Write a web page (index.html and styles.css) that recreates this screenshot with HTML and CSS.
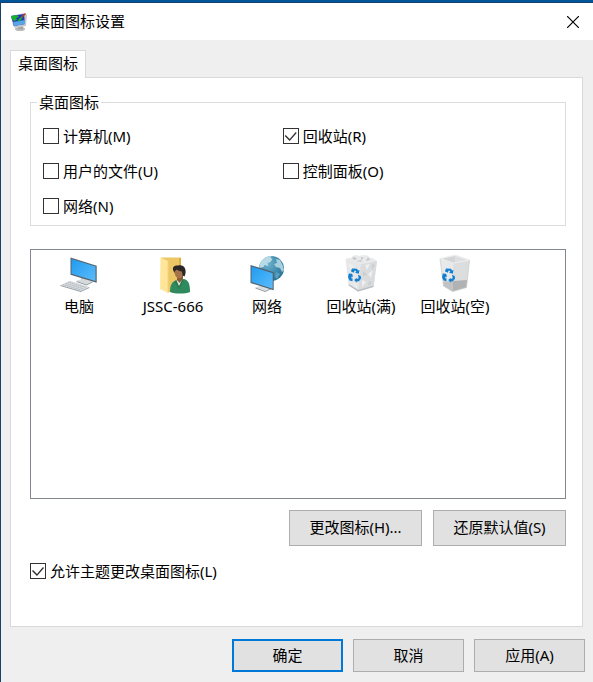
FILE: index.html
```html
<!DOCTYPE html>
<html lang="zh-CN">

<head>
    <meta charset="UTF-8">
    <meta name="viewport" content="width=device-width, initial-scale=1.0">
    <title>桌面图标设置</title>
    <link rel="stylesheet" href="styles.css">
</head>

<body>
    <form class="dialog">
        <header class="title-bar">
            <svg class="title-icon" viewBox="0 0 18 20">
                <ellipse cx="10" cy="17" rx="5" ry="2" fill="#b9b9b9" />
                <path d="M8 13h5v4H8z" fill="#a5a5a5" />
                <path d="M1 4l13-3 3 2-1 11-11 2-2-2z" fill="#c6c9cd" />
                <path d="M1 4l13-2 1 10-11 2z" fill="#2437b8" />
                <path d="M3 10l12-2v4l-11 2z" fill="#58a5e8" />
                <path d="M1 4l6-1 2 2-3 1 1 2-3 1-2-2zM8 8l4-4 2-1-3 5-3 2z" fill="#17b32b" />
                <path d="M11 5l4-4 1 1-4 4z" fill="#b23c23" />
            </svg>
            <h1>桌面图标设置</h1>
            <button type="button" class="close" aria-label="关闭">
                <svg viewBox="0 0 12 12">
                    <path d="M0 0l12 12M12 0L0 12" stroke="#000" stroke-width="1.2" />
                </svg>
            </button>
        </header>

        <main class="content">
            <div class="tabs" role="tablist">
                <button type="button" class="tab" role="tab" aria-selected="true">桌面图标</button>
            </div>

            <section class="panel">
                <fieldset class="group">
                    <legend>桌面图标</legend>
                    <label class="check"><input type="checkbox">计算机(M)</label>
                    <label class="check"><input type="checkbox" checked>回收站(R)</label>
                    <label class="check"><input type="checkbox">用户的文件(U)</label>
                    <label class="check"><input type="checkbox">控制面板(O)</label>
                    <label class="check"><input type="checkbox">网络(N)</label>
                </fieldset>

                <ul class="icon-list">
                    <li>
                        <svg viewBox="0 0 40 40">
                            <defs>
                                <linearGradient id="screen" x1="0" y1="0" x2="1" y2="1">
                                    <stop offset="0" stop-color="#1f9bf0" />
                                    <stop offset="1" stop-color="#5cbcfb" />
                                </linearGradient>
                            </defs>
                            <path d="M22 23l5 1v4l-5-1z" fill="#b4bcc3" />
                            <path d="M17.500 27l6-2.500 10 3-6 3z" fill="#d5dadd" />
                            <path d="M17.500 27v1l10 3.500 6-3v-1l-6 3z" fill="#8f989f" />
                            <path d="M11.500 3.500l26.200 8.200v17l-26.200-8z" fill="#56636d" />
                            <path d="M12.500 5l24 7.500v14.500l-24-7.200z" fill="url(#screen)" />
                            <path d="M1.500 31l9.500-4.300 19.300 6.300-8.600 4z" fill="#d8dcdf" />
                            <path d="M1.500 31v1l20.200 6 8.600-4v-1l-8.600 4z" fill="#959da3" />
                            <path d="M4 30.500l18 5.500M6.500 29.300l18 5.500M9 28l18 5.500" stroke="#a7afb5" stroke-width=".8" stroke-dasharray="1.500 .6" />
                        </svg>
                        <span>电脑</span>
                    </li>
                    <li>
                        <svg viewBox="0 0 40 40">
                            <path d="M8 3.500h20v31l-13 4z" fill="#edc766" />
                            <path d="M26 4h2v30h-2z" fill="#dcae45" />
                            <path d="M7.500 3.500L15 7v32l-8-4z" fill="#ffe69b" />
                            <path d="M15 7v32" stroke="#f4d47c" />
                            <path d="M17 38c0-7 2-10.500 7-12l7-1c4 1 6 4 6 13-5 2-15 2-20 0z" fill="#2f8a5d" />
                            <path d="M23.500 26l2.500 8 3.500-9z" fill="#dfe8e1" />
                            <path d="M23 26l-1.500 2 4.500 7 4.500-8-1-2-3.500 7z" fill="#28794f" />
                            <path d="M24 21h6v4l-3.500 4-2.500-3z" fill="#865a37" />
                            <ellipse cx="26" cy="18" rx="4.500" ry="6.500" fill="#a4734a" />
                            <path d="M20.500 17c-2-5 2-6 5-5.500 6-1.500 9 5 6 11l-2-1-.5-4c-2 0-4-1-5-2-1 1-2.500 1-2.500 3.500z" fill="#2b2625" />
                        </svg>
                        <span>JSSC-666</span>
                    </li>
                    <li>
                        <svg viewBox="0 0 40 40">
                            <defs>
                                <radialGradient id="globe" cx=".35" cy=".3" r=".8">
                                    <stop offset="0" stop-color="#6fb3ce" />
                                    <stop offset="1" stop-color="#206d95" />
                                </radialGradient>
                            </defs>
                            <circle cx="24.500" cy="14.500" r="12.500" fill="url(#globe)" />
                            <path d="M13.500 9c2-4 6-7 11-7l-1 2 2 1-2 3-3 1 1 3-4-1-1 2-4 1c0-2 0-3 1-5z" fill="#b9dbe6" />
                            <path d="M29 5l4 1 3 6 1 4-2 2-2-4-4-1-2-3 3-1z" fill="#a8d0df" />
                            <path d="M29 18l4 2-3 5-2-2z" fill="#5c9fba" />
                            <path d="M14 29l6 2v4l-6-1z" fill="#aeb7bd" />
                            <path d="M8.500 33.500l7-2.500 9.200 3-6.700 3z" fill="#d9dee1" />
                            <path d="M8.500 33.500v1L18 38l6.700-3v-1L18 37z" fill="#929ba1" />
                            <path d="M3.500 11l23.200 7.300v18L3.500 29z" fill="#52616c" />
                            <path d="M4.500 12.500l21.200 6.700v15.600L4.500 28z" fill="url(#screen)" />
                        </svg>
                        <span>网络</span>
                    </li>
                    <li>
                        <svg viewBox="0 0 40 40">
                            <defs>
                                <g id="recycle" fill="#137fd1">
                                    <path d="M-3-6.500l5 .3 1 1.700 1.500-.6-.7 3.800-3.800-1 1.300-.9-1.300-1.500-1.500 2.500-2.600-1.500z" />
                                    <path d="M-6.200-1.600l3.200.3 1.200 3-1.300-.3-.9 1.800h1.500v3l-3-.6-1.500-3.300z" />
                                    <path d="M3-.3l2.700 1.200.4 2.600-2.200 2.800-2.200.3v1.200l-2.500-2.800 2.500-2.300v1.200l2-.6z" />
                                </g>
                            </defs>
                            <path d="M4.500 5L19 2l17 5-3.500 26L17 37.500l-9.300-6z" fill="#e6e7e9" />
                            <path d="M20 9.500L36 7l-3.500 26L17 37.500z" fill="#d9dbdd" />
                            <path d="M4.500 5l6-1 1-2 4-1 3 1 3-1 5 .5 2 2 3 .5 4.500 3-8 2-8 1-8-3z" fill="#e9eaeb" />
                            <path d="M11 4l3-1 2 2-3 1zM20 3l3 1-3 2zM27 3l2 3-4 1zM15 7l5-1 1 2z" fill="#c5c8ca" />
                            <path d="M7 9l6 3-3 5zM24 11l5-1-3 6zM27 20l5-4-2 8zM21 26l4 2-4 5zM12 29l4 2v3z" fill="#efefef" />
                            <path d="M31 10l3 1-3 5zM22 17l4 4-4 1zM28 27l3 2-4 3z" fill="#cbced0" />
                            <path d="M7.500 30l10 6 15.200-4.500L32 33l-15 4.500-9.300-6z" fill="#b9bcbe" />
                            <use href="#recycle" x="14" y="21" />
                        </svg>
                        <span>回收站(满)</span>
                    </li>
                    <li>
                        <svg viewBox="0 0 40 40">
                            <path d="M5 4.500L20 1l14.500 5-3 27.500L17.500 37.500l-9-5.500z" fill="#e8e9ea" />
                            <path d="M6.500 5L20 2v7l-1.500.5z" fill="#d3d4d6" />
                            <path d="M20 2l13 4-13 3z" fill="#dedfe0" />
                            <path d="M18.500 9l16-3-3 27.500-14 4z" fill="#dcdddf" />
                            <path d="M8 27.500l10-.5-.5 10.500-9-5.500z" fill="#c1c2c4" />
                            <path d="M18 27l14.200-1-.7 7.500-14 4z" fill="#b0b2b4" />
                            <path d="M5 4.500L20 1l14.500 5-16 3z" fill="none" stroke="#efefef" />
                            <path d="M5 4.500l3.500 27.500 9 5.500 14-4 3-27.500" fill="none" stroke="#c8cacc" stroke-width=".7" />
                            <use href="#recycle" x="14" y="21" />
                        </svg>
                        <span>回收站(空)</span>
                    </li>
                </ul>

                <div class="actions">
                    <button type="button">更改图标(H)...</button>
                    <button type="button">还原默认值(S)</button>
                </div>

                <label class="check"><input type="checkbox" checked>允许主题更改桌面图标(L)</label>
            </section>
        </main>

        <footer class="footer">
            <button type="submit" class="default">确定</button>
            <button type="button">取消</button>
            <button type="button">应用(A)</button>
        </footer>
    </form>
</body>

</html>
```

FILE: styles.css
```css
* {
    box-sizing: border-box;
}

body {
    margin: 0;
    min-height: 100vh;
    background-color: #efefef;
    border-top: 2px solid #00559b;
    color: #000;
    font-family: "Noto Sans", "Noto Sans CJK SC", sans-serif;
    font-size: 15px;
    line-height: 20px;
}

button {
    padding: 0 0 2px;
    border: 1px solid #adadad;
    background-color: #e1e1e1;
    color: inherit;
    font: inherit;
}

.dialog {
    min-height: calc(100vh - 2px);
    border-top: 1px solid #17406a;
    border-left: 1px solid #17406a;
}

/* title bar */
.title-bar {
    display: flex;
    align-items: center;
    height: 37px;
    padding: 0 14px 0 9px;
    background-color: #fff;
}

.title-icon {
    width: 18px;
    height: 20px;
}

.title-bar h1 {
    flex: 1;
    margin: 0 0 2px 7px;
    font-size: 15px;
    font-weight: normal;
}

.close {
    display: flex;
    padding: 0;
    border: none;
    background: none;
}

.close svg {
    width: 12px;
    height: 12px;
}

/* tab and panel */
.content {
    padding: 10px 10px 0 9px;
}

.tabs {
    display: flex;
}

.tab {
    position: relative;
    width: 76px;
    height: 28px;
    margin-bottom: -1px;
    padding-bottom: 4px;
    border-color: #d9d9d9;
    border-bottom: none;
    background-color: #fff;
}

.panel {
    padding: 14px 16px 45px 19px;
    border: 1px solid #d9d9d9;
    background-color: #fff;
}

.group {
    display: grid;
    grid-template-columns: 47% 1fr;
    row-gap: 15px;
    margin: 0;
    padding: 14px 12px 9px;
    border: 1px solid #dcdcdc;
}

.group legend {
    margin-left: -6px;
    padding: 0 2px;
}

.check {
    display: flex;
    align-items: center;
    gap: 4px;
}

.check input {
    appearance: none;
    width: 16px;
    height: 16px;
    margin: 0;
    border: 1px solid #333;
    background-color: #fff;
}

.check input:checked::before {
    content: "";
    display: block;
    width: 14px;
    height: 14px;
    background-color: #333;
    clip-path: polygon(1px 7px, 2px 6px, 6px 10px, 12px 3px, 13px 4px, 6px 12px);
}

/* icon list */
.icon-list {
    display: grid;
    grid-template-columns: repeat(auto-fill, 94px);
    align-content: start;
    min-height: 250px;
    margin: 23px 0 11px;
    padding: 4px 1px;
    border: 1px solid #828790;
    list-style: none;
}

.icon-list li {
    display: flex;
    flex-direction: column;
    align-items: center;
    gap: 2px;
}

.icon-list svg {
    width: 40px;
    height: 40px;
}

/* buttons */
.actions {
    display: flex;
    justify-content: flex-end;
    gap: 11px;
    margin-bottom: 15px;
}

.actions button {
    width: 133px;
    height: 36px;
}

.footer {
    display: flex;
    justify-content: flex-end;
    gap: 10px;
    padding: 12px 8px 10px;
}

.footer button {
    width: 111px;
    height: 33px;
}

.footer .default {
    border: 2px solid #0078d7;
}
```
